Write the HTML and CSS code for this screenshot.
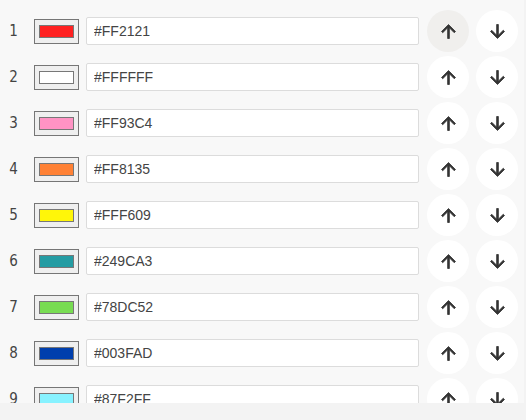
FILE: index.html
```html
<!DOCTYPE html>
<html lang="en">

<head>
    <meta charset="UTF-8">
    <meta name="viewport" content="width=device-width, initial-scale=1.0">
    <title>Palette</title>
    <link rel="stylesheet" href="styles.css">
</head>

<body>
    <div class="list">
        <div class="row">
            <span class="num">1</span>
            <div class="swatch"><span style="background: #FF2121"></span></div>
            <input class="hex" type="text" value="#FF2121">
            <button class="btn hover"><svg viewBox="0 0 24 24"><path d="M4 12l1.41 1.41L11 7.83V20h2V7.83l5.58 5.59L20 12l-8-8-8 8z"/></svg></button>
            <button class="btn"><svg viewBox="0 0 24 24"><path d="M20 12l-1.41-1.41L13 16.170V4h-2v12.17l-5.58-5.59L4 12l8 8 8-8z"/></svg></button>
        </div>
        <div class="row">
            <span class="num">2</span>
            <div class="swatch"><span style="background: #FFFFFF"></span></div>
            <input class="hex" type="text" value="#FFFFFF">
            <button class="btn"><svg viewBox="0 0 24 24"><path d="M4 12l1.41 1.41L11 7.83V20h2V7.83l5.58 5.59L20 12l-8-8-8 8z"/></svg></button>
            <button class="btn"><svg viewBox="0 0 24 24"><path d="M20 12l-1.41-1.41L13 16.17V4h-2v12.17l-5.58-5.59L4 12l8 8 8-8z"/></svg></button>
        </div>
        <div class="row">
            <span class="num">3</span>
            <div class="swatch"><span style="background: #FF93C4"></span></div>
            <input class="hex" type="text" value="#FF93C4">
            <button class="btn"><svg viewBox="0 0 24 24"><path d="M4 12l1.41 1.41L11 7.83V20h2V7.83l5.58 5.59L20 12l-8-8-8 8z"/></svg></button>
            <button class="btn"><svg viewBox="0 0 24 24"><path d="M20 12l-1.41-1.41L13 16.17V4h-2v12.17l-5.58-5.59L4 12l8 8 8-8z"/></svg></button>
        </div>
        <div class="row">
            <span class="num">4</span>
            <div class="swatch"><span style="background: #FF8135"></span></div>
            <input class="hex" type="text" value="#FF8135">
            <button class="btn"><svg viewBox="0 0 24 24"><path d="M4 12l1.41 1.41L11 7.83V20h2V7.83l5.58 5.59L20 12l-8-8-8 8z"/></svg></button>
            <button class="btn"><svg viewBox="0 0 24 24"><path d="M20 12l-1.41-1.41L13 16.17V4h-2v12.17l-5.58-5.59L4 12l8 8 8-8z"/></svg></button>
        </div>
        <div class="row">
            <span class="num">5</span>
            <div class="swatch"><span style="background: #FFF609"></span></div>
            <input class="hex" type="text" value="#FFF609">
            <button class="btn"><svg viewBox="0 0 24 24"><path d="M4 12l1.41 1.41L11 7.83V20h2V7.83l5.58 5.59L20 12l-8-8-8 8z"/></svg></button>
            <button class="btn"><svg viewBox="0 0 24 24"><path d="M20 12l-1.41-1.41L13 16.17V4h-2v12.17l-5.58-5.59L4 12l8 8 8-8z"/></svg></button>
        </div>
        <div class="row">
            <span class="num">6</span>
            <div class="swatch"><span style="background: #249CA3"></span></div>
            <input class="hex" type="text" value="#249CA3">
            <button class="btn"><svg viewBox="0 0 24 24"><path d="M4 12l1.41 1.41L11 7.83V20h2V7.83l5.58 5.59L20 12l-8-8-8 8z"/></svg></button>
            <button class="btn"><svg viewBox="0 0 24 24"><path d="M20 12l-1.41-1.41L13 16.17V4h-2v12.17l-5.58-5.59L4 12l8 8 8-8z"/></svg></button>
        </div>
        <div class="row">
            <span class="num">7</span>
            <div class="swatch"><span style="background: #78DC52"></span></div>
            <input class="hex" type="text" value="#78DC52">
            <button class="btn"><svg viewBox="0 0 24 24"><path d="M4 12l1.41 1.41L11 7.83V20h2V7.83l5.58 5.59L20 12l-8-8-8 8z"/></svg></button>
            <button class="btn"><svg viewBox="0 0 24 24"><path d="M20 12l-1.41-1.41L13 16.17V4h-2v12.17l-5.58-5.59L4 12l8 8 8-8z"/></svg></button>
        </div>
        <div class="row">
            <span class="num">8</span>
            <div class="swatch"><span style="background: #003FAD"></span></div>
            <input class="hex" type="text" value="#003FAD">
            <button class="btn"><svg viewBox="0 0 24 24"><path d="M4 12l1.41 1.41L11 7.83V20h2V7.83l5.58 5.59L20 12l-8-8-8 8z"/></svg></button>
            <button class="btn"><svg viewBox="0 0 24 24"><path d="M20 12l-1.41-1.41L13 16.17V4h-2v12.17l-5.58-5.59L4 12l8 8 8-8z"/></svg></button>
        </div>
        <div class="row">
            <span class="num">9</span>
            <div class="swatch"><span style="background: #87F2FF"></span></div>
            <input class="hex" type="text" value="#87F2FF">
            <button class="btn"><svg viewBox="0 0 24 24"><path d="M4 12l1.41 1.41L11 7.83V20h2V7.83l5.58 5.59L20 12l-8-8-8 8z"/></svg></button>
            <button class="btn"><svg viewBox="0 0 24 24"><path d="M20 12l-1.41-1.41L13 16.17V4h-2v12.17l-5.58-5.59L4 12l8 8 8-8z"/></svg></button>
        </div>
    </div>
</body>

</html>
```

FILE: styles.css
```css
/* General styles */
body {
    margin: 0;
    padding: 0;
    background: #f3f3f3;
    font-family: 'Liberation Sans', sans-serif;
}

.list {
    width: 524px;
    height: 403px;
    overflow: hidden;
    background: #f8f8f8;
    padding-top: 10px;
    box-sizing: border-box;
}

.row {
    display: flex;
    align-items: center;
    height: 42px;
    margin-bottom: 4px;
}

.num {
    width: 27px;
    margin-right: 7px;
    text-align: center;
    font-family: 'DejaVu Sans', sans-serif;
    font-stretch: condensed;
    font-size: 15px;
    color: #444;
}

.swatch {
    width: 45px;
    height: 25px;
    box-sizing: border-box;
    border: 1px solid #767676;
    background: #efefef;
    padding: 5px 4px;
}

.swatch span {
    display: block;
    height: 100%;
    box-sizing: border-box;
    border: 1px solid #777;
}

.hex {
    width: 333px;
    height: 28px;
    box-sizing: border-box;
    margin: 0 0 0 7px;
    padding: 0 7px;
    border: 1px solid #dcdcdc;
    border-radius: 2px;
    background: #fff;
    font-family: 'Liberation Sans', sans-serif;
    font-size: 14px;
    color: #444;
}

.btn {
    width: 42px;
    height: 42px;
    margin-left: 7px;
    padding: 0;
    border: none;
    border-radius: 50%;
    background: #fff;
    display: flex;
    align-items: center;
    justify-content: center;
}

.hex + .btn {
    margin-left: 8px;
}

.btn.hover {
    background: #f0efed;
}

.btn svg {
    width: 21px;
    height: 21px;
    fill: #333;
    stroke: #333;
    stroke-width: 0.9;
    stroke-linejoin: miter;
}
```
